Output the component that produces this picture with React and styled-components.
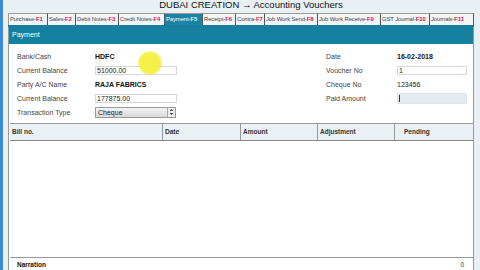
import React from 'react';
import styled, { createGlobalStyle } from 'styled-components';

const GlobalStyle = createGlobalStyle`
  html, body {
    margin: 0;
    padding: 0;
    width: 480px;
    height: 270px;
    overflow: hidden;
    background: #e8f0f3;
    font-family: "Liberation Sans", Arial, sans-serif;
  }
`;

const tabs = [
  { name: 'Purchase-', key: 'F1', w: 40 },
  { name: 'Sales-', key: 'F2', w: 28 },
  { name: 'Debit Notes-', key: 'F3', w: 43 },
  { name: 'Credit Notes-', key: 'F4', w: 46 },
  { name: 'Payment-', key: 'F5', w: 38, active: true },
  { name: 'Receipt-', key: 'F6', w: 33 },
  { name: 'Contra-', key: 'F7', w: 29 },
  { name: 'Job Work Send-', key: 'F8', w: 53 },
  { name: 'Job Work Receive-', key: 'F9', w: 63 },
  { name: 'GST Journal-', key: 'F10', w: 49 },
  { name: 'Journals-', key: 'F11', w: 44 },
];

const columns = [
  { label: 'Bill no.', w: 153 },
  { label: 'Date', w: 78 },
  { label: 'Amount', w: 77 },
  { label: 'Adjustment', w: 77 },
  { label: 'Pending', w: 78, pad: 9 },
];

function App() {
  return (
    <>
      <GlobalStyle />
      <Page>
        <Strip />
        <Main>
          <Title>DUBAI CREATION → Accounting Vouchers</Title>
          <Tabs>
            {tabs.map((t) => (
              <Tab key={t.key} $w={t.w} $active={t.active}>
                {t.name}
                <Key $active={t.active}>{t.key}</Key>
              </Tab>
            ))}
          </Tabs>
          <Panel>
            <Header>Payment</Header>
            <Form>
              <Label>Bank/Cash</Label>
              <Value><b>HDFC</b></Value>
              <Label>Date</Label>
              <Value><b>16-02-2018</b></Value>

              <Label>Current Balance</Label>
              <Value><Input $w={82}>51000.00</Input></Value>
              <Label>Voucher No</Label>
              <Value><Input $w={70}>1</Input></Value>

              <Label>Party A/C Name</Label>
              <Value><b>RAJA FABRICS</b></Value>
              <Label>Cheque No</Label>
              <Value>123456</Value>

              <Label>Current Balance</Label>
              <Value><Input $w={82}>177875.00</Input></Value>
              <Label>Paid Amount</Label>
              <Value><Input $w={70} $filled><Caret /></Input></Value>

              <Label>Transaction Type</Label>
              <Value>
                <Select>
                  <span>Cheque</span>
                  <Arrow>
                    <svg width="5" height="8" viewBox="0 0 5 8">
                      <path d="M0.5 3 L2.5 1 L4.5 3 Z M0.5 5 L2.5 7 L4.5 5 Z" fill="#444" />
                    </svg>
                  </Arrow>
                </Select>
              </Value>
              <span />
              <span />
            </Form>
            <Table>
              <HeadRow>
                {columns.map((c) => (
                  <HeadCell key={c.label} $w={c.w} $pad={c.pad}>{c.label}</HeadCell>
                ))}
              </HeadRow>
              <Body />
            </Table>
            <Narration>
              <b>Narration</b>
              <span>0</span>
            </Narration>
            <Cursor />
          </Panel>
        </Main>
      </Page>
    </>
  );
}

const Page = styled.div`
  display: flex;
  height: 270px;
`;

const Strip = styled.div`
  width: 3px;
  background: #3d8bd8;
  flex-shrink: 0;
`;

const Main = styled.div`
  display: flex;
  flex-direction: column;
  width: 466px;
  margin-left: 5px;
`;

const Title = styled.div`
  height: 13px;
  line-height: 10px;
  font-size: 9.5px;
  color: #111;
  text-align: center;
  padding-left: 20px;
  white-space: nowrap;
`;

const Tabs = styled.div`
  display: flex;
  height: 12px;
  border-bottom: 2px solid #157d9e;
`;

const Tab = styled.div`
  width: ${(p) => p.$w}px;
  box-sizing: border-box;
  border-right: 1px solid #555;
  border-top: 1px solid #999;
  background: ${(p) => (p.$active ? '#1b84a6' : '#f3f6f7')};
  color: ${(p) => (p.$active ? '#fff' : '#444')};
  font-size: 5.9px;
  letter-spacing: -0.1px;
  line-height: 11px;
  white-space: nowrap;
  overflow: hidden;
  padding-left: 1px;
  &:first-child {
    border-left: 1px solid #999;
  }
`;

const Key = styled.span`
  color: ${(p) => (p.$active ? '#e8f6fb' : '#e0124f')};
  font-weight: bold;
`;

const Panel = styled.div`
  position: relative;
  flex: 1;
  background: #fff;
  border-left: 1px solid #999;
  border-right: 1px solid #999;
  display: flex;
  flex-direction: column;
`;

const Header = styled.div`
  height: 17px;
  line-height: 15px;
  background: #16809f;
  color: #fff;
  font-size: 7px;
  padding-left: 3px;
`;

const Form = styled.div`
  display: grid;
  grid-template-columns: 78px 231px 71px 70px;
  grid-auto-rows: 13.8px;
  padding: 6px 0 0 8px;
  height: 73px;
  font-size: 7px;
  color: #333;
`;

const Label = styled.div`
  display: flex;
  align-items: center;
  color: #444;
`;

const Value = styled.div`
  display: flex;
  align-items: center;
  color: #222;
  b {
    color: #111;
  }
`;

const Input = styled.div`
  width: ${(p) => p.$w}px;
  height: ${(p) => (p.$filled ? 11 : 9)}px;
  box-sizing: border-box;
  border: 1px solid ${(p) => (p.$filled ? '#dde6ea' : '#d6d6d6')};
  background: ${(p) => (p.$filled ? '#e4ecf0' : '#fff')};
  font-size: 7px;
  line-height: 7px;
  padding-left: 1px;
  display: flex;
  align-items: center;
`;

const Caret = styled.span`
  width: 1px;
  height: 7px;
  background: #333;
`;

const Select = styled.div`
  width: 81px;
  height: 11px;
  box-sizing: border-box;
  border: 1px solid #999;
  background: linear-gradient(#f4f4f4, #d8d8d8);
  display: flex;
  align-items: center;
  justify-content: space-between;
  font-size: 7px;
  padding-left: 2px;
`;

const Arrow = styled.div`
  width: 7px;
  height: 9px;
  border-left: 1px solid #aaa;
  background: #eee;
  display: flex;
  align-items: center;
  justify-content: center;
`;

const Table = styled.div`
  display: flex;
  flex-direction: column;
  flex: 1;
  margin-left: 1px;
  border-top: 1px solid #999;
  border-bottom: 1px solid #999;
`;

const HeadRow = styled.div`
  display: flex;
  height: 16px;
  background: #e9f1f5;
  border-bottom: 1px solid #888;
`;

const HeadCell = styled.div`
  width: ${(p) => p.$w}px;
  box-sizing: border-box;
  padding-left: ${(p) => p.$pad || 2}px;
  border-right: 1px solid #999;
  font-size: 6.5px;
  font-weight: bold;
  color: #333;
  line-height: 16px;
  &:last-child {
    border-right: none;
    flex: 1;
  }
`;

const Body = styled.div`
  flex: 1;
`;

const Narration = styled.div`
  height: 12px;
  display: flex;
  justify-content: space-between;
  align-items: center;
  padding: 0 9px 0 8px;
  font-size: 6.5px;
  color: #111;
  span {
    color: #333;
  }
`;

const Cursor = styled.div`
  position: absolute;
  left: 129px;
  top: 24px;
  width: 24px;
  height: 24px;
  border-radius: 50%;
  background: radial-gradient(circle, rgba(245, 240, 60, 0.95) 55%, rgba(245, 240, 60, 0.4) 80%, rgba(245, 240, 60, 0) 100%);
`;

export default App;
